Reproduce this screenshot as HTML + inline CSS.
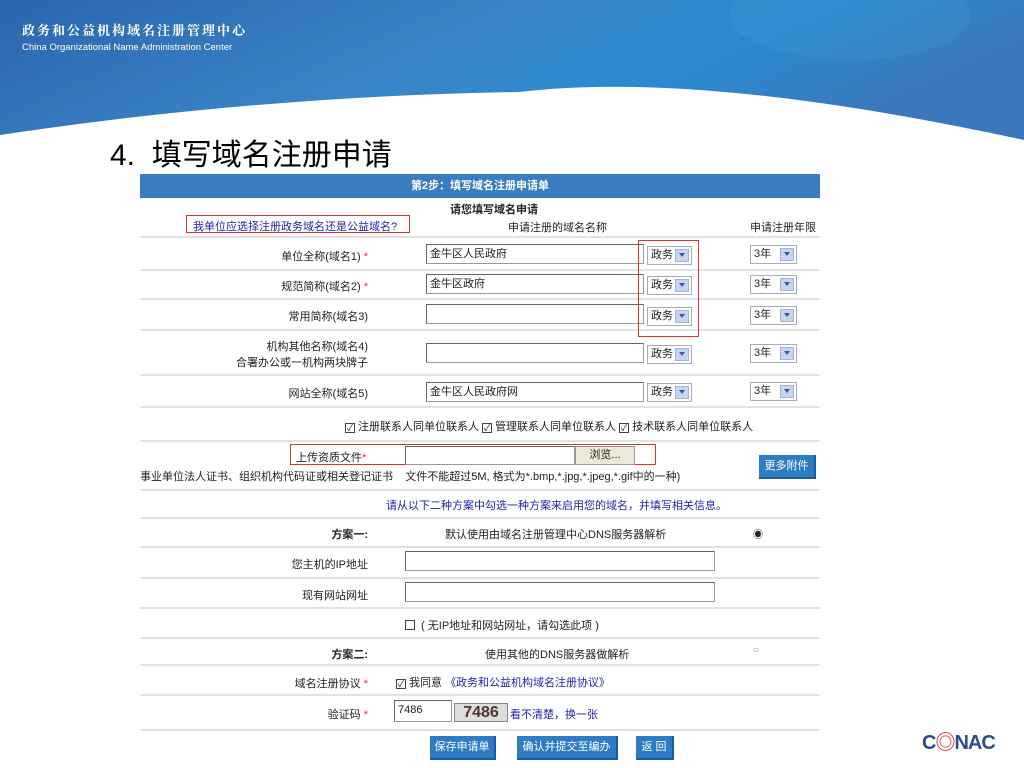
<!DOCTYPE html>
<html><head><meta charset="utf-8"><style>
*{margin:0;padding:0;box-sizing:border-box}
body{width:1024px;height:768px;position:relative;background:#fff;overflow:hidden;font-family:"Liberation Sans","Noto Sans CJK SC",sans-serif;font-size:11px;color:#222}
.a{position:absolute;white-space:nowrap}
.ln{position:absolute;left:140px;width:680px;height:2px;background:#e2e2e2}
.inp{position:absolute;height:20px;border:1px solid #999;border-top-color:#666;border-left-color:#666;background:#fff;font-size:11px;line-height:18px;padding-left:3px}
.sel{position:absolute;height:19px;border:1px solid #aab;background:#fff;font-size:11px;line-height:17px;padding-left:3px}
.sel i{position:absolute;right:2px;top:2px;width:14px;height:13px;background:#c6d6f0;border:1px solid #9fb4d8}
.sel i:after{content:"";position:absolute;left:3px;top:3px;border:3px solid transparent;border-top:4px solid #3a5a9a;border-bottom:0;width:0}
.red{position:absolute;border:1px solid #d33}
.btn{position:absolute;background:#2d7cc4;color:#fff;font-size:11px;text-align:center;line-height:22px;border-right:2px solid #1d5c98;border-bottom:2px solid #1d5c98}
.st{color:#d33}
.cb{display:inline-block;width:10px;height:10px;border:1px solid #444;font-size:9px;line-height:8px;text-align:center;vertical-align:-1px;margin-right:3px}
.r{text-align:right}
</style></head><body>
<svg class="a" style="left:0;top:0" width="1024" height="145">
<defs><linearGradient id="g" x1="0" y1="0" x2="1" y2="0.3"><stop offset="0" stop-color="#2a65ad"/><stop offset="0.5" stop-color="#3a86c8"/><stop offset="0.75" stop-color="#2a8ad0"/><stop offset="1" stop-color="#3a78bb"/></linearGradient></defs>
<path d="M0 0H1024V140Q700 70 520 92Q260 96 0 135Z" fill="url(#g)"/>
<ellipse cx="850" cy="15" rx="120" ry="45" fill="#5aaee0" opacity="0.15"/>
</svg>
<div class="a" style="left:22px;top:20px;color:#fff;font-size:13px;font-family:'Noto Serif CJK SC',serif;font-weight:bold;letter-spacing:2px">政务和公益机构域名注册管理中心</div>
<div class="a" style="left:22px;top:42px;color:#fff;font-size:9.5px">China Organizational Name Administration Center</div>
<div class="a" style="left:110px;top:136px;font-size:30px;color:#000;line-height:40px">4.&nbsp; 填写域名注册申请</div>
<div class="a" style="left:140px;top:174px;width:680px;height:24px;background:#3a7cc0;color:#fff;text-align:center;line-height:24px;font-weight:bold">第2步：填写域名注册申请单</div>
<div class="a" style="left:450px;top:201px;font-weight:bold">请您填写域名申请</div>
<div class="red" style="left:186px;top:215px;width:224px;height:18px"></div>
<div class="a" style="left:193px;top:218px;color:#22a">我单位应选择注册政务域名还是公益域名?</div>
<div class="a" style="left:508px;top:219px">申请注册的域名名称</div>
<div class="a" style="left:750px;top:219px">申请注册年限</div>
<div class="ln" style="top:236px"></div>
<div class="ln" style="top:269px"></div>
<div class="ln" style="top:298px"></div>
<div class="ln" style="top:329px"></div>
<div class="ln" style="top:374px"></div>
<div class="ln" style="top:406px"></div>
<div class="ln" style="top:440px"></div>
<div class="ln" style="top:489px"></div>
<div class="ln" style="top:517px"></div>
<div class="ln" style="top:546px"></div>
<div class="ln" style="top:577px"></div>
<div class="ln" style="top:607px"></div>
<div class="ln" style="top:637px"></div>
<div class="ln" style="top:664px"></div>
<div class="ln" style="top:694px"></div>
<div class="ln" style="top:729px"></div>

<div class="a r" style="left:200px;width:168px;top:248px">单位全称(域名1) <span class="st">*</span></div>
<div class="a r" style="left:200px;width:168px;top:278px">规范简称(域名2) <span class="st">*</span></div>
<div class="a r" style="left:200px;width:168px;top:308px">常用简称(域名3)</div>
<div class="a r" style="left:200px;width:168px;top:339px;line-height:16px">机构其他名称(域名4)<br>合署办公或一机构两块牌子</div>
<div class="a r" style="left:200px;width:168px;top:385px">网站全称(域名5)</div>

<div class="inp" style="left:426px;top:244px;width:218px">金牛区人民政府</div>
<div class="inp" style="left:426px;top:274px;width:218px">金牛区政府</div>
<div class="inp" style="left:426px;top:304px;width:218px"></div>
<div class="inp" style="left:426px;top:343px;width:218px"></div>
<div class="inp" style="left:426px;top:382px;width:218px">金牛区人民政府网</div>

<div class="sel" style="left:647px;top:246px;width:45px">政务<i></i></div>
<div class="sel" style="left:647px;top:276px;width:45px">政务<i></i></div>
<div class="sel" style="left:647px;top:307px;width:45px">政务<i></i></div>
<div class="sel" style="left:647px;top:345px;width:45px">政务<i></i></div>
<div class="sel" style="left:647px;top:383px;width:45px">政务<i></i></div>
<div class="sel" style="left:750px;top:245px;width:47px">3年<i></i></div>
<div class="sel" style="left:750px;top:275px;width:47px">3年<i></i></div>
<div class="sel" style="left:750px;top:306px;width:47px">3年<i></i></div>
<div class="sel" style="left:750px;top:344px;width:47px">3年<i></i></div>
<div class="sel" style="left:750px;top:382px;width:47px">3年<i></i></div>
<div class="red" style="left:638px;top:240px;width:61px;height:97px"></div>

<div class="a" style="left:345px;top:418px"><span class="cb">✓</span>注册联系人同单位联系人 <span class="cb">✓</span>管理联系人同单位联系人 <span class="cb">✓</span>技术联系人同单位联系人</div>

<div class="red" style="left:290px;top:444px;width:366px;height:21px"></div>
<div class="a" style="left:296px;top:449px">上传资质文件<span class="st">*</span></div>
<div class="inp" style="left:405px;top:446px;width:170px;height:19px"></div>
<div class="a" style="left:575px;top:446px;width:60px;height:19px;background:#ece9d8;border:1px solid #999;text-align:center;line-height:17px">浏览...</div>
<div class="a" style="left:140px;top:468px">事业单位法人证书、组织机构代码证或相关登记证书 &nbsp;&nbsp; 文件不能超过5M, 格式为*.bmp,*.jpg,*.jpeg,*.gif中的一种)</div>
<div class="btn" style="left:759px;top:455px;width:57px;height:24px">更多附件</div>

<div class="a" style="left:386px;top:497px;color:#22a">请从以下二种方案中勾选一种方案来启用您的域名，并填写相关信息。</div>
<div class="a r" style="left:280px;width:88px;top:526px;font-weight:bold">方案一:</div>
<div class="a" style="left:445px;top:526px">默认使用由域名注册管理中心DNS服务器解析</div>
<div class="a" style="left:753px;top:526px;font-size:10px">◉</div>
<div class="a r" style="left:250px;width:118px;top:556px">您主机的IP地址</div>
<div class="inp" style="left:405px;top:551px;width:310px"></div>
<div class="a r" style="left:250px;width:118px;top:587px">现有网站网址</div>
<div class="inp" style="left:405px;top:582px;width:310px"></div>
<div class="a" style="left:405px;top:617px"><span class="cb"></span> ( 无IP地址和网站网址，请勾选此项 )</div>
<div class="a r" style="left:280px;width:88px;top:646px;font-weight:bold">方案二:</div>
<div class="a" style="left:485px;top:646px">使用其他的DNS服务器做解析</div>
<div class="a" style="left:753px;top:645px;font-size:10px;color:#888">○</div>
<div class="a r" style="left:250px;width:118px;top:675px">域名注册协议 <span class="st">*</span></div>
<div class="a" style="left:396px;top:674px"><span class="cb">✓</span>我同意 <span style="color:#22a">《政务和公益机构域名注册协议》</span></div>
<div class="a r" style="left:250px;width:118px;top:706px">验证码 <span class="st">*</span></div>
<div class="inp" style="left:394px;top:700px;width:58px;height:22px">7486</div>
<div class="a" style="left:454px;top:703px;width:54px;height:19px;background:#ddd;border:1px solid #888;font-size:16px;line-height:18px;text-align:center;color:#533;font-weight:bold">7486</div>
<div class="a" style="left:510px;top:706px;color:#22a">看不清楚，换一张</div>
<div class="btn" style="left:430px;top:736px;width:66px;height:24px">保存申请单</div>
<div class="btn" style="left:517px;top:736px;width:101px;height:24px">确认并提交至编办</div>
<div class="btn" style="left:636px;top:736px;width:38px;height:24px">返 回</div>
<div class="a" style="left:922px;top:726px;font-size:20px;font-weight:bold;color:#2a4e8e;letter-spacing:-1px">C<span style="color:#c33">◎</span>NAC</div>
</body></html>
